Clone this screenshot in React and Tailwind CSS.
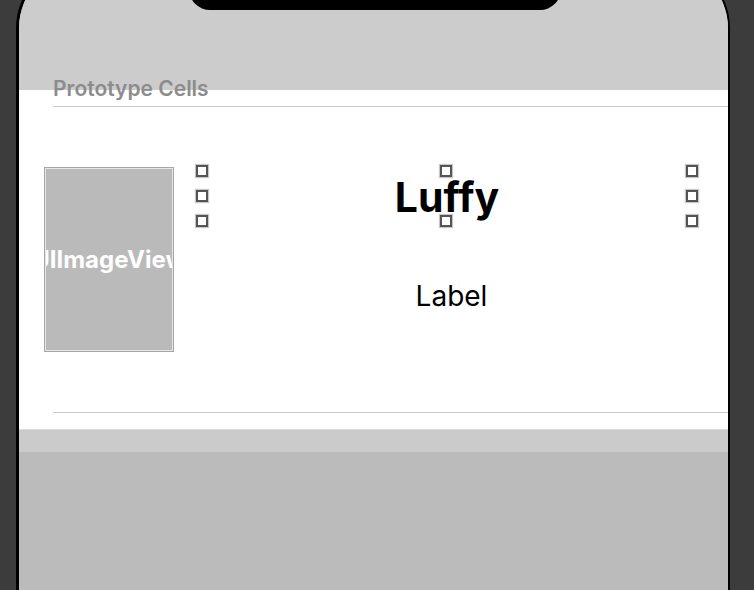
import React from 'react'

// small selection handle drawn on the corners / edges of the selected label
function Handle({ className }) {
    return (
        <div className={`absolute w-[12px] h-[12px] bg-white border-2 border-[#545454] shadow-[0_0_1px_1px_#c8c8c8] ${className}`} />
    )
}

export default function App() {
    return (
        <div className="w-[754px] h-[590px] overflow-hidden bg-[#3c3c3c]" style={{ fontFamily: 'Inter, "Noto Sans", sans-serif' }}>

            {/* ── Phone frame ─────────────────────────────────────────────── */}
            <div className="relative ml-[16px] -mt-[40px] w-[714px] h-[640px] border-t-[3px] border-l-[3px] border-r-[2px] border-black rounded-t-[68px] overflow-hidden bg-[#bbbbbb]">

                {/* notch */}
                <div className="absolute left-[170px] top-0 w-[372px] h-[47px] bg-black rounded-b-[21px] z-20" />

                {/* ── Grey nav / header area ─────────────────────────────── */}
                <div className="relative h-[127px] bg-[#cccccc]">
                    <div className="absolute left-[34px] top-[115px] z-10 text-[21px] leading-none font-semibold text-[#8c8c8c] whitespace-nowrap">
                        Prototype Cells
                    </div>
                </div>

                {/* ── Table section (white) ──────────────────────────────── */}
                <div className="h-[339px] bg-white pt-[16px]">
                    <div className="ml-[34px] h-px bg-[#cbcbcb]" />

                    {/* prototype cell */}
                    <div className="h-[305px] flex items-start pl-[25px] pt-[60px]">
                        <div className="w-[130px] h-[185px] border border-[#a6a6a6] p-px bg-[#e6e6e6] shrink-0">
                            <div className="w-full h-full bg-[#bababa] flex items-center justify-center overflow-hidden">
                                <span className="text-white text-[24px] font-bold leading-none whitespace-nowrap">UIImageView</span>
                            </div>
                        </div>

                        <div className="ml-[28px] w-[490px] flex flex-col">
                            {/* selected "Luffy" label */}
                            <div className="relative mt-[4px] h-[49px] flex items-center justify-center pt-[3px]">
                                <span className="text-[41px] font-bold leading-none text-black">Luffy</span>
                                <Handle className="-left-[6px] -top-[6px]" />
                                <Handle className="-left-[6px] top-[19px]" />
                                <Handle className="-left-[6px] -bottom-[7px]" />
                                <Handle className="left-[238px] -top-[6px]" />
                                <Handle className="left-[238px] -bottom-[7px]" />
                                <Handle className="-right-[6px] -top-[6px]" />
                                <Handle className="-right-[6px] top-[19px]" />
                                <Handle className="-right-[6px] -bottom-[7px]" />
                            </div>

                            <div className="mt-[62px] flex justify-center pl-[9px]">
                                <span className="text-[28px] leading-none text-black">Label</span>
                            </div>
                        </div>
                    </div>

                    <div className="ml-[34px] h-px bg-[#cbcbcb]" />
                </div>

                {/* ── Grey footer strip ─────────────────────────────────── */}
                <div className="h-[23px] bg-[#cbcbcb] border-t border-[#dadada]" />
            </div>
        </div>
    )
}
